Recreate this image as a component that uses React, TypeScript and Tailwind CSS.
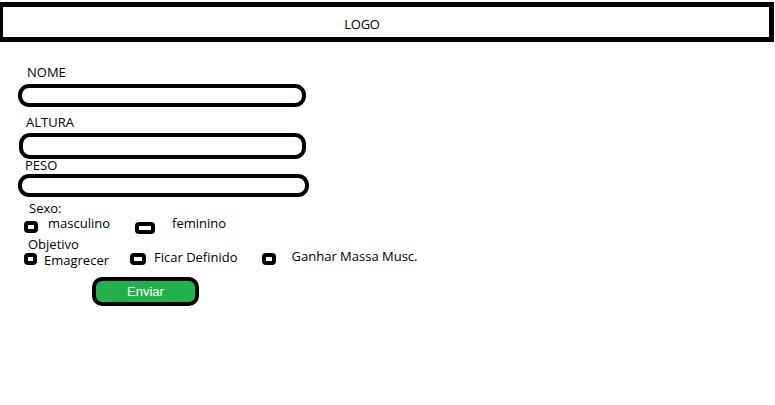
const font = "font-['Open_Sans',sans-serif]";

function Field({ label, labelClass, inputClass }: { label: string; labelClass: string; inputClass: string }) {
  return (
    <>
      <div className={`leading-[16px] h-[16px] ${labelClass}`}>{label}</div>
      <div className={`border-[4px] border-black rounded-[11px] bg-white ${inputClass}`} />
    </>
  );
}

function Radio({ w = "w-[14px]" }: { w?: string }) {
  return <div className={`h-[12px] ${w} border-[4px] border-black rounded-[4px] bg-white shrink-0`} />;
}

export default function App() {
  return (
    <div className={`w-[775px] h-[405px] bg-white text-[13px] text-black ${font}`}>
      {/* Header */}
      <div className="mt-[2px] w-[774px] h-[40px] border-[5px] border-l-[3px] border-black flex items-center justify-center">
        <span className="mr-[48px] mt-[5px] tracking-[-0.3px]">LOGO</span>
      </div>

      <div className="pl-[18px] flex flex-col items-start">
        <Field label="NOME" labelClass="mt-[22px] ml-[9px]" inputClass="mt-[4px] w-[288px] h-[23px]" />
        <Field label="ALTURA" labelClass="mt-[7px] ml-[8px]" inputClass="mt-[3px] ml-[1px] w-[287px] h-[26px]" />
        <Field label="PESO" labelClass="mt-[-2px] ml-[7px]" inputClass="mt-[1px] w-[291px] h-[23px]" />

        <div className="mt-[3px] ml-[11px] leading-[16px]">Sexo:</div>
        <div className="flex items-start h-[16px] leading-[16px] mt-[-1px]">
          <div className="ml-[6px] mt-[6px]"><Radio /></div>
          <span className="ml-[10px]">masculino</span>
          <div className="ml-[25px] mt-[7px]"><Radio w="w-[20px]" /></div>
          <span className="ml-[17px]">feminino</span>
        </div>

        <div className="mt-[5px] ml-[10px] leading-[16px]">Objetivo</div>
        <div className="flex items-start h-[16px] leading-[16px] mt-[-1px]">
          <div className="ml-[6px] mt-[2px]"><Radio w="w-[13px]" /></div>
          <span className="ml-[7px] mt-[1px]">Emagrecer</span>
          <div className="ml-[21px] mt-[2px]"><Radio w="w-[16px]" /></div>
          <span className="ml-[8px] mt-[-2px]">Ficar Definido</span>
          <div className="ml-[24px] mt-[2px]"><Radio /></div>
          <span className="ml-[16px] mt-[-3px]">Ganhar Massa Musc.</span>
        </div>

        <button className="mt-[10px] ml-[74px] w-[107px] h-[29px] border-[4px] border-black rounded-[10px] bg-[#22b14c] text-white font-['Liberation_Sans',sans-serif] text-[13px] leading-none flex items-center justify-center">
          Enviar
        </button>
      </div>
    </div>
  );
}
